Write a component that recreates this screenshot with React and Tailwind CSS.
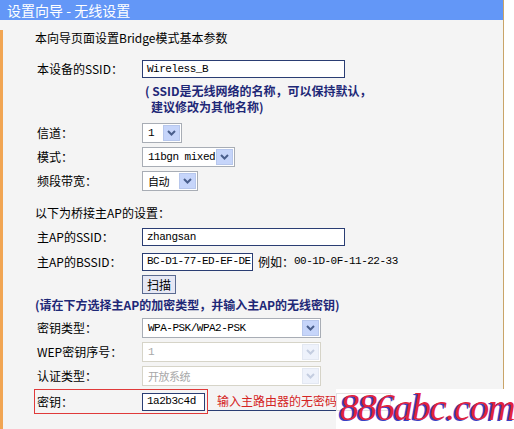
import React from 'react';

const cjk = "font-['SimSun','Noto_Sans_CJK_SC',sans-serif]";
const mono = "font-['Liberation_Mono','Noto_Sans_CJK_SC',monospace]";

const Chevron = ({ disabled }) => (
  <span
    className={`flex h-full w-[17px] items-center justify-center border ${
      disabled ? 'border-[#e3e8f2] bg-[#eef2fb]' : 'border-[#b7c7ec] bg-[#c6d5fa]'
    }`}
  >
    <svg width="9" height="6" viewBox="0 0 9 6">
      <path d="M1 1 L4.5 4.5 L8 1" fill="none" stroke={disabled ? '#c4cde0' : '#4a5f8c'} strokeWidth="2" />
    </svg>
  </span>
);

const Select = ({ value, width, disabled, font = mono }) => (
  <div
    className={`flex h-[20px] items-center justify-between border bg-white p-px ${
      disabled ? 'border-[#d6d4c8]' : 'border-[#a8adb5]'
    }`}
    style={{ width }}
  >
    <span className={`pl-1 text-[11px] tracking-[-0.5px] ${font} ${disabled ? 'text-[#a8a8a8]' : 'text-black'}`}>
      {value}
    </span>
    <Chevron disabled={disabled} />
  </div>
);

const Input = ({ value, width }) => (
  <div
    className={`flex h-[18px] items-center border border-[#2a3d73] bg-white pl-1 text-[11px] tracking-[-0.5px] text-black ${mono}`}
    style={{ width }}
  >
    {value}
  </div>
);

const Row = ({ label, children, className = '' }) => (
  <div className={`flex items-center pl-[34px] ${className}`}>
    <div className={`w-[105px] text-[12px] text-black ${cjk}`}>{label}</div>
    {children}
  </div>
);

export default function App() {
  return (
    <div className="relative h-[429px] w-[514px] overflow-hidden bg-white">
      <div className="h-full w-[504px] border-r border-[#c9a468] bg-[#f4f4f4]">
        <div className={`flex h-[20px] items-center bg-[#6397f7] pl-[7px] text-[14px] text-white ${cjk}`}>
          设置向导 - 无线设置
        </div>
        <div className="border-l-[3px] border-[#f1a553] pb-4">
          <div className={`mt-[10px] h-[16px] pl-[32px] text-[12px] leading-[16px] text-black ${cjk}`}>
            本向导页面设置Bridge模式基本参数
          </div>

          <Row label="本设备的SSID：" className="mt-[14px] h-[18px]">
            <Input value="Wireless_B" width={203} />
          </Row>
          <div className={`ml-[142px] mt-[5px] text-[12px] font-bold leading-[16px] text-[#1e2877] ${cjk}`}>
            <div>( SSID是无线网络的名称，可以保持默认，</div>
            <div className="pl-[6px]">建议修改为其他名称)</div>
          </div>

          <Row label="信道：" className="mt-[8px] h-[20px]">
            <Select value="1" width={40} />
          </Row>
          <Row label="模式：" className="mt-[4px] h-[20px]">
            <Select value="11bgn mixed" width={93} />
          </Row>
          <Row label="频段带宽：" className="mt-[4px] h-[20px]">
            <Select value="自动" width={56} font={cjk} />
          </Row>

          <div className={`mt-[14px] h-[16px] pl-[32px] text-[12px] leading-[16px] text-black ${cjk}`}>
            以下为桥接主AP的设置：
          </div>

          <Row label="主AP的SSID：" className="mt-[7px] h-[18px]">
            <Input value="zhangsan" width={203} />
          </Row>
          <Row label="主AP的BSSID：" className="mt-[6px] h-[19px]">
            <Input value="BC-D1-77-ED-EF-DE" width={111} />
            <span className={`ml-[5px] text-[12px] text-black ${cjk}`}>例如：</span>
            <span className={`text-[11px] tracking-[-0.5px] text-black ${mono}`}>00-1D-0F-11-22-33</span>
          </Row>
          <Row label="" className="mt-[4px] h-[19px]">
            <button className={`h-[19px] w-[34px] border border-[#5a6a90] bg-[#e6e8f4] text-[12px] leading-none text-black ${cjk}`}>
              扫描
            </button>
          </Row>

          <div className={`mt-[3px] h-[16px] pl-[32px] text-[12px] font-bold leading-[16px] text-[#1e2877] ${cjk}`}>
            (请在下方选择主AP的加密类型，并输入主AP的无线密钥)
          </div>

          <Row label="密钥类型：" className="mt-[5px] h-[20px]">
            <Select value="WPA-PSK/WPA2-PSK" width={179} />
          </Row>
          <Row label="WEP密钥序号：" className="mt-[4px] h-[20px]">
            <Select value="1" width={179} disabled />
          </Row>
          <Row label="认证类型：" className="mt-[4px] h-[20px]">
            <Select value="开放系统" width={179} disabled font={cjk} />
          </Row>

          <div className="mt-[3px] flex h-[25px] items-center">
            <div className="ml-[31px] flex h-[25px] w-[174px] items-center border border-[#e03a3a] pl-[2px]">
              <div className={`w-[105px] text-[12px] text-black ${cjk}`}>密钥：</div>
              <Input value="1a2b3c4d" width={63} />
            </div>
            <div className={`flex h-[19px] w-[131px] items-center whitespace-nowrap border-b border-r border-[#2a3d73] pl-[9px] text-[12px] text-[#d42424] ${cjk}`}>
              输入主路由器的无密码
            </div>
          </div>
        </div>
      </div>

      <div className="absolute bottom-0 left-[336px] h-[40px] w-[178px] bg-white">
        <div className="mt-[4px] h-[18px] w-[55px] border border-[#e2e2e2]" />
        <div className="absolute left-[4px] top-[-4px] font-['Liberation_Serif',serif] text-[38px] italic leading-[44px] tracking-[-1px] text-[#e2233f] [text-shadow:-2px_1px_0_#3b3fc4]">
          886abc.com
        </div>
      </div>
    </div>
  );
}
